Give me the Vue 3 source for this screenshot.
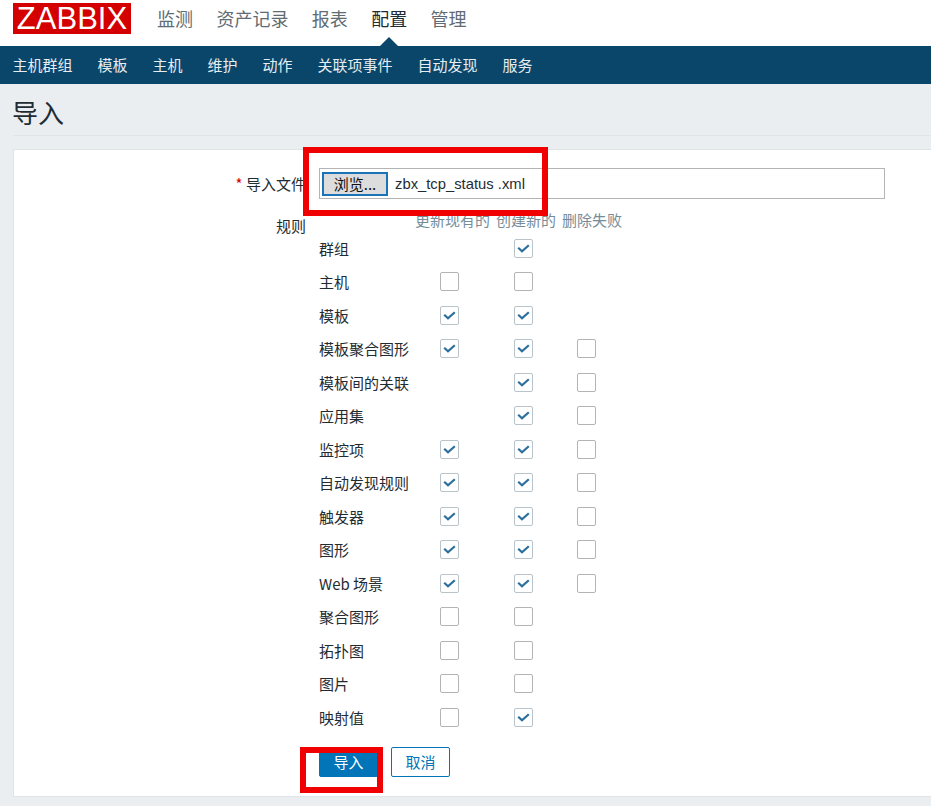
<script setup>
const top = ['监测', '资产记录', '报表', '配置', '管理']
const sub = ['主机群组', '模板', '主机', '维护', '动作', '关联项事件', '自动发现', '服务']
const rows = [
  ['群组', null, true, null],
  ['主机', false, false, null],
  ['模板', true, true, null],
  ['模板聚合图形', true, true, false],
  ['模板间的关联', null, true, false],
  ['应用集', null, true, false],
  ['监控项', true, true, false],
  ['自动发现规则', true, true, false],
  ['触发器', true, true, false],
  ['图形', true, true, false],
  ['Web 场景', true, true, false],
  ['聚合图形', false, false, null],
  ['拓扑图', false, false, null],
  ['图片', false, false, null],
  ['映射值', false, true, null]
]
</script>

<template>
  <div class="page">
    <header class="topbar">
      <div class="logo">ZABBIX</div>
      <nav class="topnav">
        <span v-for="t in top" :key="t" class="topitem" :class="{ active: t === '配置' }">{{ t }}</span>
      </nav>
    </header>
    <nav class="subnav">
      <span v-for="s in sub" :key="s">{{ s }}</span>
    </nav>
    <div class="titlebar"><h1>导入</h1></div>
    <main class="panel">
      <div class="formrow filerow">
        <label class="lbl"><i>*</i> 导入文件</label>
        <div class="filebox">
          <button class="browse">浏览...</button>
          <span class="fname">zbx_tcp_status .xml</span>
        </div>
      </div>
      <div class="formrow rulesrow">
        <label class="lbl rules">规则</label>
        <div class="rulegrid">
          <div class="head">
            <span></span><span>更新现有的</span><span>创建新的</span><span>删除失败</span>
          </div>
          <div v-for="r in rows" :key="r[0]" class="rule">
            <span class="name">{{ r[0] }}</span>
            <span v-for="(c, i) in r.slice(1)" :key="i" class="cell" :class="'c' + i">
              <span v-if="c !== null" class="cb" :class="{ on: c }">
                <svg v-if="c" width="13" height="13" viewBox="0 0 13 13"><path d="M1.2 5.8 5 9.3 11.8 3.2" fill="none" stroke="#2a6f9e" stroke-width="2.2"/></svg>
              </span>
            </span>
          </div>
        </div>
      </div>
      <div class="actions">
        <button class="primary">导入</button>
        <button class="ghost">取消</button>
      </div>
    </main>
    <div class="mark m1"></div>
    <div class="mark m2"></div>
  </div>
</template>

<style>
html, body { margin: 0; background: #ebeef0; }
</style>

<style scoped>
.page {
  position: relative;
  width: 931px;
  height: 806px;
  overflow: hidden;
  background: #ebeef0;
  font-family: "Noto Sans CJK SC", "Liberation Sans", sans-serif;
  font-size: 15px;
  color: #1f2c33;
}
.topbar {
  height: 46px;
  background: #fff;
  display: flex;
  align-items: flex-start;
  box-sizing: border-box;
  padding: 3px 0 0 13px;
}
.logo {
  width: 118px;
  height: 31px;
  background: #d40000;
  color: #fff;
  font-family: "Liberation Sans", sans-serif;
  font-size: 31px;
  line-height: 32px;
  text-align: center;
}
.topnav {
  display: flex;
  gap: 23.4px;
  margin-left: 26px;
  font-size: 18px;
  line-height: 30px;
  color: #5f6c73;
}
.topitem { position: relative; height: 43px; }
.topitem.active { color: #1f2c33; }
.topitem.active::after {
  content: "";
  position: absolute;
  left: 50%;
  bottom: 0;
  margin-left: -9px;
  border: 9px solid transparent;
  border-top: 0;
  border-bottom-color: #0a466a;
}
.subnav {
  height: 38px;
  background: #0a466a;
  color: #e6edf1;
  display: flex;
  gap: 25px;
  padding-left: 12.5px;
  line-height: 38px;
}
.titlebar {
  height: 51px;
  margin: 0 0 13px 13px;
  border-bottom: 1px solid #dfe4e7;
  box-sizing: content-box;
}
h1 {
  margin: 0 0 0 -1px;
  font-size: 26px;
  font-weight: 400;
  line-height: 55px;
}
.panel {
  margin-left: 13px;
  width: 930px;
  height: 648px;
  box-sizing: border-box;
  background: #fff;
  border: 1px solid #dfe4e7;
  padding-top: 18px;
}
.formrow { display: flex; }
.lbl {
  width: 292px;
  flex: none;
  text-align: right;
  line-height: 31px;
}
.lbl i { color: #d40000; font-style: normal; }
.filebox {
  margin-left: 13px;
  width: 566px;
  height: 31px;
  box-sizing: border-box;
  border: 1px solid #b4b4b4;
  display: flex;
  align-items: center;
  padding-left: 2px;
}
.browse {
  width: 66px;
  height: 24px;
  padding: 0;
  border: 2px solid #1b74b8;
  background: #dddddd;
  color: #111;
  font: 15px "Noto Sans CJK SC", sans-serif;
  line-height: 20px;
}
.fname {
  margin-left: 7px;
  font-family: "Liberation Sans", sans-serif;
  font-size: 14.8px;
  color: #1f2c33;
}
.rulesrow { margin-top: 11px; }
.rules { line-height: 32px; }
.rulegrid { margin-left: 13px; }
.head, .rule {
  display: grid;
  grid-template-columns: 96px 81px 66px 61px;
}
.head {
  height: 17px;
  line-height: 17px;
  color: #768d99;
  margin-top: 1px;
  margin-bottom: 4px;
}
.rule {
  height: 33.5px;
  align-items: center;
  line-height: 20px;
}
.cell { display: flex; }
.c0 { padding-left: 25px; }
.c1 { padding-left: 18px; }
.c2 { padding-left: 15px; }
.cb {
  width: 19px;
  height: 19px;
  margin-top: -1px;
  box-sizing: border-box;
  border: 1px solid #b4b4b4;
  border-radius: 2px;
  background: #fff;
  display: flex;
  align-items: center;
  justify-content: center;
}
.cb.on { border-color: #b9c4ca; }
.actions {
  display: flex;
  gap: 13px;
  margin: 12px 0 0 305px;
  align-items: flex-end;
}
.actions button {
  width: 59px;
  height: 30px;
  padding: 0;
  border-radius: 2px;
  font: 15px "Noto Sans CJK SC", sans-serif;
  box-sizing: border-box;
}
.primary { background: #0275b8; border: 1px solid #0275b8; color: #fff; }
.ghost { background: #fff; border: 1px solid #0275b8; color: #0275b8; }
.mark {
  position: absolute;
  box-sizing: border-box;
  border: 6px solid #f00000;
}
.m1 { left: 303px; top: 147px; width: 245px; height: 69px; }
.m2 { left: 300px; top: 747px; width: 83px; height: 46px; }
</style>
